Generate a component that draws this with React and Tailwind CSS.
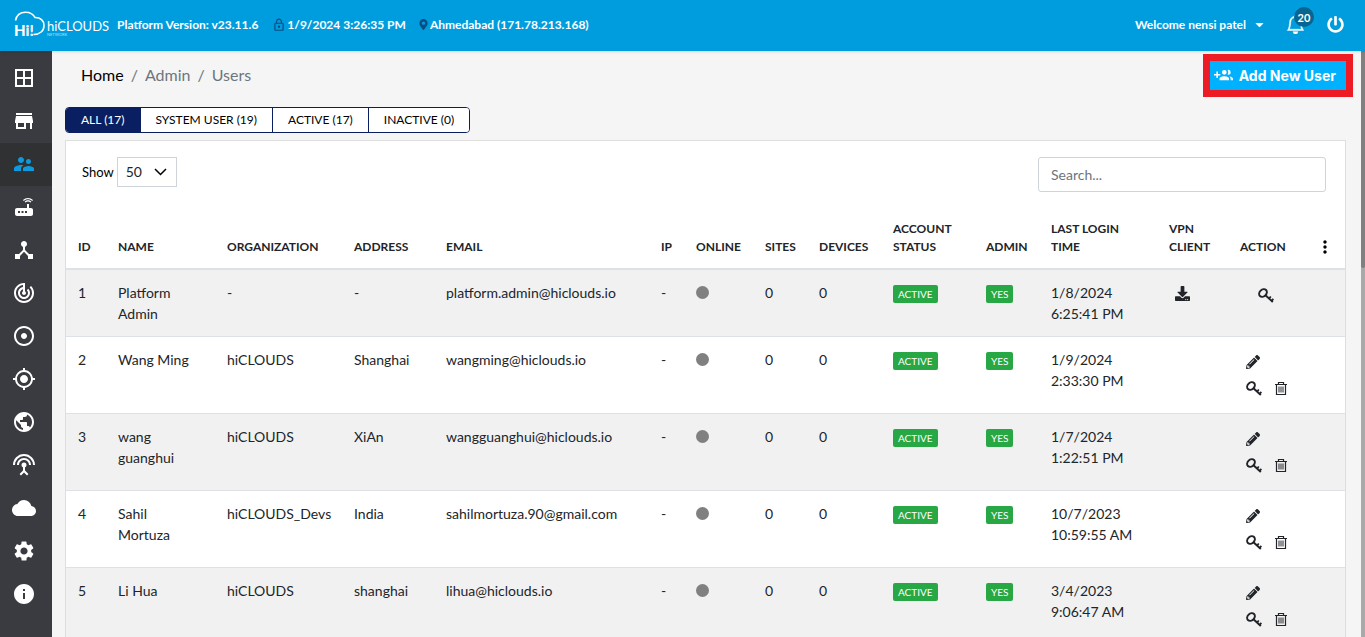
import React, { useState } from "react";
import {
  MdBorderAll,
  MdStore,
  MdSupervisorAccount,
  MdRouter,
  MdDeviceHub,
  MdTrackChanges,
  MdAdjust,
  MdGpsFixed,
  MdPublic,
  MdSettingsInputAntenna,
  MdCloud,
  MdSettings,
  MdInfo,
  MdMoreVert,
  MdLockOutline,
} from "react-icons/md";
import {
  FaPowerOff,
  FaMapMarkerAlt,
  FaDownload,
  FaPencilAlt,
  FaCaretDown,
} from "react-icons/fa";
import { BsBell } from "react-icons/bs";

const menuItems = [
  { name: "Dashboard", icon: MdBorderAll },
  { name: "Organizations", icon: MdStore },
  { name: "Users", icon: MdSupervisorAccount, active: true },
  { name: "Devices", icon: MdRouter },
  { name: "Topology", icon: MdDeviceHub },
  { name: "Tracking", icon: MdTrackChanges },
  { name: "Monitor", icon: MdAdjust },
  { name: "Location", icon: MdGpsFixed },
  { name: "Network", icon: MdPublic },
  { name: "Antenna", icon: MdSettingsInputAntenna },
  { name: "Cloud", icon: MdCloud },
  { name: "Settings", icon: MdSettings },
  { name: "About", icon: MdInfo },
];

const tabs = ["ALL (17)", "SYSTEM USER (19)", "ACTIVE (17)", "INACTIVE (0)"];

const columns = [
  { title: "ID", width: "w-[40px]" },
  { title: "NAME", width: "w-[109px]" },
  { title: "ORGANIZATION", width: "w-[127px]" },
  { title: "ADDRESS", width: "w-[92px]" },
  { title: "EMAIL", width: "w-[215px]" },
  { title: "IP", width: "w-[35px]" },
  { title: "ONLINE", width: "w-[69px]" },
  { title: "SITES", width: "w-[54px]" },
  { title: "DEVICES", width: "w-[74px]" },
  { title: "ACCOUNT STATUS", width: "w-[93px]" },
  { title: "ADMIN", width: "w-[65px]" },
  { title: "LAST LOGIN TIME", width: "w-[118px]" },
  { title: "VPN CLIENT", width: "w-[71px]" },
  { title: "ACTION", width: "w-[84px]" },
];

const users = [
  {
    id: 1,
    name: "Platform Admin",
    organization: "-",
    address: "-",
    email: "platform.admin@hiclouds.io",
    date: "1/8/2024",
    time: "6:25:41 PM",
    platform: true,
  },
  {
    id: 2,
    name: "Wang Ming",
    organization: "hiCLOUDS",
    address: "Shanghai",
    email: "wangming@hiclouds.io",
    date: "1/9/2024",
    time: "2:33:30 PM",
  },
  {
    id: 3,
    name: "wang guanghui",
    organization: "hiCLOUDS",
    address: "XiAn",
    email: "wangguanghui@hiclouds.io",
    date: "1/7/2024",
    time: "1:22:51 PM",
  },
  {
    id: 4,
    name: "Sahil Mortuza",
    organization: "hiCLOUDS_Devs",
    address: "India",
    email: "sahilmortuza.90@gmail.com",
    date: "10/7/2023",
    time: "10:59:55 AM",
  },
  {
    id: 5,
    name: "Li Hua",
    organization: "hiCLOUDS",
    address: "shanghai",
    email: "lihua@hiclouds.io",
    date: "3/4/2023",
    time: "9:06:47 AM",
  },
];

const Logo = () => (
  <svg
    width="96"
    height="28"
    viewBox="0 0 96 28"
    role="img"
    aria-label="hiCLOUDS"
    fill="white"
    fontFamily="Lato, sans-serif"
    fontWeight="400"
  >
    <path
      d="M1.5 9.500C2.500 4 6.500 1.200 11.500 1.200c4.500 0 7.800 2 9.500 5.300C26.500 6.300 30 9.800 30 14.500c0 5.300-4 9-10.500 9"
      fill="none"
      stroke="white"
      strokeWidth="1.600"
    />
    <text x="0" y="25" fontWeight="900" fontSize="15">
      Hi!
    </text>
    <text x="33" y="20" fontSize="13">
      hiCLOUDS
    </text>
    <text x="33" y="25" fillOpacity="0.700" fontSize="4">
      NETWORK
    </text>
  </svg>
);

const AddUserIcon = () => (
  <svg width="19" height="19" viewBox="0 0 24 24" fill="currentColor">
    <path d="M13 13c-2 0-6 1-6 3v2h12v-2c0-2-4-3-6-3m6.620.160C20.450 13.880 21 14.820 21 16v2h3v-2c0-1.540-2.370-2.500-4.380-2.840M13 11a3 3 0 1 0 0-6 3 3 0 0 0 0 6m5 0a3 3 0 1 0-.920-5.860C17.650 5.950 18 6.940 18 8c0 1.040-.350 2.030-.920 2.840.290.110.600.160.920.160M8 10H5V7H3v3H0v2h3v3h2v-3h3z" />
  </svg>
);

const KeyIcon = () => (
  <svg width="16" height="16" viewBox="0 0 16 16" fill="none" stroke="currentColor">
    <ellipse cx="5" cy="5" rx="4.300" ry="3.300" strokeWidth="2" transform="rotate(-45 5 5)" />
    <path d="M7.200 7l7.600 7" strokeWidth="2" />
    <path d="M13.400 13.200l2-2.300M10.800 10.800l2-2.300" strokeWidth="1.800" />
  </svg>
);

const TrashIcon = () => (
  <svg width="14" height="15" viewBox="0 0 14 15" fill="none" stroke="currentColor">
    <path d="M1 3.500h12M4.500 3.300V1.500h5v1.800M2.500 3.500v10h9v-10" strokeWidth="1.200" />
    <path d="M5 5.500v6M7 5.500v6M9 5.500v6" strokeWidth="1" />
  </svg>
);

const Header = () => {
  return (
    <header className="relative z-10 flex h-[51px] shrink-0 items-center bg-[#009dde] pb-[2px] pl-[14px] pr-[21px] text-[12px] font-bold text-white shadow-sm">
      <a href="#home" className="mr-[7px]">
        <Logo />
      </a>
      <span className="mr-[14px]">Platform Version: v23.11.6</span>
      <MdLockOutline className="mr-px text-[#0b4a82]" size={14} />
      <span className="mr-3">1/9/2024 3:26:35 PM</span>
      <FaMapMarkerAlt className="mr-px text-[#0b4a82]" size={11} />
      <span>Ahmedabad (171.78.213.168)</span>

      <div className="ml-auto flex items-center">
        <button type="button" className="flex items-center gap-[7px]">
          Welcome nensi patel
          <FaCaretDown size={13} />
        </button>
        <button type="button" aria-label="Notifications" className="relative ml-5">
          <BsBell size={19} strokeWidth={0.4} />
          <span className="absolute -top-2 left-2 flex size-5 items-center justify-center rounded-full bg-[#07658f] text-[11px]">
            20
          </span>
        </button>
        <button type="button" aria-label="Logout" className="ml-[22px]">
          <FaPowerOff size={17} />
        </button>
      </div>
    </header>
  );
};

const SideBar = () => {
  return (
    <nav className="w-[52px] shrink-0 bg-[#3a3b40] pt-[6px]">
      {menuItems.map(({ name, icon: Icon, active }) => (
        <a
          key={name}
          href={"#" + name.toLowerCase()}
          aria-label={name}
          className={
            active
              ? "flex h-[43px] items-center bg-[#2f3132] pb-px pl-3 text-[#0c9bdc]"
              : "flex h-[43px] items-center pb-px pl-3 text-white"
          }
        >
          <Icon size={24} />
        </a>
      ))}
    </nav>
  );
};

const Badge = ({ children }) => (
  <span className="block w-fit rounded-xs bg-[#28a745] px-[5px] text-[10px] leading-[18px] text-white">
    {children}
  </span>
);

const UserRow = ({ user }) => {
  return (
    <tr className="border-t border-[#dee2e6] align-top first:border-t-0 odd:bg-[#f1f1f1]">
      <td className="p-3">{user.id}</td>
      <td className="p-3 pr-6">{user.name}</td>
      <td className="p-3">{user.organization}</td>
      <td className="p-3">{user.address}</td>
      <td className="p-3">{user.email}</td>
      <td className="p-3">-</td>
      <td className="p-3">
        <div className="mt-1 size-[13px] rounded-full bg-[#808080]" />
      </td>
      <td className="p-3">0</td>
      <td className="p-3">0</td>
      <td className="px-3 py-[15px]">
        <Badge>ACTIVE</Badge>
      </td>
      <td className="px-3 py-[15px]">
        <Badge>YES</Badge>
      </td>
      <td className="p-3">
        {user.date}
        <br />
        {user.time}
      </td>
      <td className="px-[18px] py-4">
        {user.platform && (
          <button type="button" aria-label="Download VPN client" className="block">
            <FaDownload size={15} />
          </button>
        )}
      </td>
      <td className="px-[18px] py-4" colSpan={2}>
        {user.platform ? (
          <button type="button" aria-label="Reset password" className="ml-3 block pt-[2px]">
            <KeyIcon />
          </button>
        ) : (
          <div className="flex h-11 flex-col justify-between pt-[2px]">
            <button type="button" aria-label="Edit" className="block self-start">
              <FaPencilAlt size={14} />
            </button>
            <div className="flex items-start gap-3">
              <button type="button" aria-label="Reset password">
                <KeyIcon />
              </button>
              <button type="button" aria-label="Delete">
                <TrashIcon />
              </button>
            </div>
          </div>
        )}
      </td>
    </tr>
  );
};

const App = () => {
  const [activeTab, setActiveTab] = useState(tabs[0]);
  const [search, setSearch] = useState("");
  const [pageSize, setPageSize] = useState("50");

  const rows = users.filter((user) =>
    (user.name + user.email).toLowerCase().includes(search.toLowerCase())
  );

  return (
    <div className="flex h-screen flex-col overflow-hidden bg-[#f5f5f5] font-['Lato',sans-serif] text-[14px] leading-[21px] text-[#212529]">
      <Header />
      <div className="flex min-h-0 flex-1">
        <SideBar />
        <main className="min-w-0 flex-1 pl-[13px]">
          <div className="flex h-14 items-start justify-between pr-2 pt-[3px]">
            <nav className="flex gap-[7px] pl-4 pt-[10px] text-[16px] text-[#6c757d]">
              <a href="#home" className="text-black">
                Home
              </a>
              <span>/</span>
              <span>Admin</span>
              <span>/</span>
              <span>Users</span>
            </nav>
            <div className="border-[7px] border-[#ed1c24]">
              <button
                type="button"
                className="flex h-[29px] items-center gap-[6px] bg-[#00b1ff] pl-1 pr-[10px] font-['Inter',sans-serif] text-[14px] font-bold text-white"
              >
                <AddUserIcon />
                Add New User
              </button>
            </div>
          </div>

          <div className="flex h-[26px] w-fit overflow-hidden rounded border border-[#0a1f62] text-[12px] text-black">
            {tabs.map((tab) => (
              <button
                key={tab}
                type="button"
                onClick={() => setActiveTab(tab)}
                className={
                  tab === activeTab
                    ? "bg-[#0a1f62] px-[15px] pb-[2px] text-white"
                    : "border-l border-[#0a1f62] bg-white px-[15px] pb-[2px]"
                }
              >
                {tab}
              </button>
            ))}
          </div>

          <section className="mr-[15px] mt-[7px] border border-[#dedede] bg-white pt-4">
            <div className="flex items-start justify-between pl-4 pr-[19px]">
              <label className="flex items-center gap-[3px] text-[13px] text-black">
                Show
                <span className="relative">
                  <select
                    value={pageSize}
                    onChange={(e) => setPageSize(e.target.value)}
                    className="block h-[30px] w-[60px] appearance-none border border-[#ced4da] bg-white pb-px pl-2 text-[14px] text-[#212529]"
                  >
                    <option>10</option>
                    <option>25</option>
                    <option>50</option>
                  </select>
                  <svg
                    className="pointer-events-none absolute right-[10px] top-[11px]"
                    width="13"
                    height="8"
                    viewBox="0 0 13 8"
                    fill="none"
                    stroke="black"
                    strokeWidth="1.500"
                  >
                    <path d="M1 1l5.500 5.500L12 1" />
                  </svg>
                </span>
              </label>
              <input
                type="text"
                aria-label="Search"
                placeholder="Search..."
                value={search}
                onChange={(e) => setSearch(e.target.value)}
                className="h-[35px] w-72 rounded-[3px] border border-[#ced4da] px-3 placeholder:text-[#6c757d] focus:border-[#80bdff] focus:outline-none"
              />
            </div>

            <table className="mt-4 w-full table-fixed border-collapse text-left">
              <colgroup>
                {columns.map((col) => (
                  <col key={col.title} className={col.width} />
                ))}
                <col className="w-[33px]" />
              </colgroup>
              <thead className="border-b-2 border-[#dee2e6]">
                <tr className="align-bottom text-[12px] leading-[18px]">
                  {columns.map((col) => (
                    <th
                      key={col.title}
                      className={
                        col.title === "LAST LOGIN TIME"
                          ? "py-3 pl-3 pr-6 font-bold"
                          : "py-3 pl-3 font-bold"
                      }
                    >
                      {col.title}
                    </th>
                  ))}
                  <th className="py-3 pl-[3px]">
                    <button type="button" aria-label="Choose columns" className="block text-black">
                      <MdMoreVert size={20} className="-my-px" />
                    </button>
                  </th>
                </tr>
              </thead>
              <tbody>
                {rows.map((user) => (
                  <UserRow key={user.id} user={user} />
                ))}
              </tbody>
            </table>
          </section>
        </main>
        <div className="w-1 shrink-0 bg-[#a9a9a9]">
          <div className="h-[217px] rounded-b-sm bg-[#808080]" />
        </div>
      </div>
    </div>
  );
};

export default App;
